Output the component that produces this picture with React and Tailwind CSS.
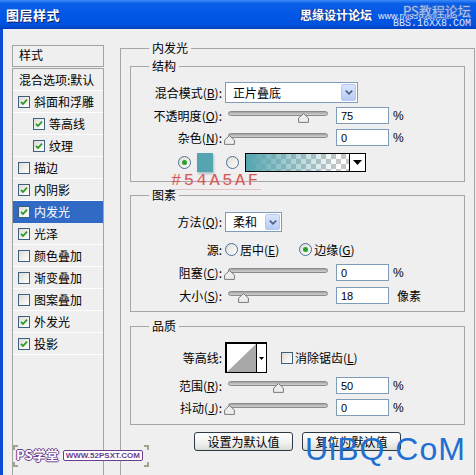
import React from 'react'

// Photoshop "图层样式" dialog, inner glow page, XP Luna look.

const styles = [
  { t: '斜面和浮雕', on: true },
  { t: '等高线', on: true, indent: true },
  { t: '纹理', on: true, indent: true },
  { t: '描边', on: false },
  { t: '内阴影', on: true },
  { t: '内发光', on: true, sel: true },
  { t: '光泽', on: true },
  { t: '颜色叠加', on: false },
  { t: '渐变叠加', on: false },
  { t: '图案叠加', on: false },
  { t: '外发光', on: true },
  { t: '投影', on: true },
]

function Check({ on }) {
  return (
    <span className="flex h-[12px] w-[12px] shrink-0 items-center justify-center border border-[#3d5f80] bg-[linear-gradient(135deg,#dedcd4,#ffffff)]">
      {on && (
        <svg width="8" height="8" viewBox="0 0 8 8">
          <path d="M1 3.8 L3 6 L7 1.6" fill="none" stroke="#2a9a2a" strokeWidth="1.8" />
        </svg>
      )}
    </span>
  )
}

function Radio({ on }) {
  return (
    <span className="flex h-[13px] w-[13px] shrink-0 items-center justify-center rounded-full border border-[#4a6f95] bg-[linear-gradient(135deg,#dedcd4,#ffffff)]">
      {on && <span className="h-[5px] w-[5px] rounded-full bg-[#2aa02a]" />}
    </span>
  )
}

// label with the underlined access key, e.g. 混合模式(B):
function Key({ t, k, colon = true }) {
  return (
    <span>
      {t}(<span className="underline">{k}</span>){colon ? ':' : ''}
    </span>
  )
}

function Row({ label, className = '', children }) {
  return (
    <div className={`flex items-center ${className}`}>
      <span className="w-[91px] shrink-0 text-right">{label}</span>
      <div className="ml-[3px] flex items-center">{children}</div>
    </div>
  )
}

function Chevron() {
  return (
    <svg width="8" height="5" viewBox="0 0 8 5">
      <path d="M0.8 0.6 L4 3.8 L7.2 0.6" fill="none" stroke="#4d6185" strokeWidth="1.7" />
    </svg>
  )
}

function Select({ text, className }) {
  return (
    <div className={`flex items-center border border-[#7f9db9] bg-white pl-[7px] ${className}`}>
      <span className="flex-1">{text}</span>
      <span className="mr-[1px] flex h-[calc(100%-2px)] w-[15px] items-center justify-center rounded-[2px] border border-[#b5c8f2] bg-[linear-gradient(#dbe6fd,#b6cbf6)]">
        <Chevron />
      </span>
    </div>
  )
}

// pos = thumb centre in px from the track's left end
function Slider({ pos }) {
  return (
    <div className="relative ml-[3px] h-[17px] w-[100px]">
      <div className="mt-[4px] h-[5px] rounded-full border border-[#8a8a8a] bg-[linear-gradient(#a4a4a4,#d2d2d2)]" />
      <svg className="absolute top-[6px]" style={{ left: pos - 5.5 }} width="11" height="10" viewBox="0 0 11 10">
        <path d="M5.5 0.6 L10.4 5 V9.4 H0.6 V5 Z" fill="#ededed" stroke="#7a7a7a" />
      </svg>
    </div>
  )
}

function Num({ v }) {
  return (
    <div className="ml-[8px] flex h-[17px] w-[53px] items-center border border-[#7f9db9] bg-white pl-[4px] [font-family:'Liberation_Sans',sans-serif] text-[11px]">
      {v}
    </div>
  )
}

function TitleBar() {
  return (
    <div className="relative flex h-[29px] shrink-0 items-center bg-[linear-gradient(to_bottom,#3d8af7_0%,#0a5fe8_12%,#0257e6_50%,#0052df_85%,#003fbd_100%)] pl-[6px]">
      <span className="text-[13px] font-bold tracking-[0.5px] text-white [text-shadow:1px_1px_0_#0a246a]">图层样式</span>
      <span className="absolute left-[300px] top-[8px] text-[12px] font-bold leading-[14px] text-white [text-shadow:0_0_1px_#1a3d9c,0_0_1px_#1a3d9c,1px_0_0_#1a3d9c,-1px_0_0_#1a3d9c]">
        思缘设计论坛
      </span>
      <span className="absolute left-[378px] top-[11px] text-[9px] leading-[10px] text-[#e4ecff] [font-family:'Liberation_Sans',sans-serif]">
        www.missyuan.com
      </span>
      <span className="absolute left-[403px] top-[3px] text-[13px] leading-[15px] text-[#a9c6f4] [text-shadow:1px_0_0_#3a66c8,-1px_0_0_#3a66c8,0_1px_0_#3a66c8,0_-1px_0_#3a66c8]">
        PS教程论坛
      </span>
      <span className="absolute left-[393px] top-[18px] text-[10px] leading-[11px] text-[#dce6ff] [font-family:'Liberation_Mono',monospace]">
        BBS.16XX8.COM
      </span>
    </div>
  )
}

function StyleList() {
  return (
    <div className="ml-[9px] mt-[16px] flex w-[92px] shrink-0 flex-col">
      <div className="flex h-[22px] items-center border border-[#a3a3a3] pb-[3px] pl-[6px]">样式</div>
      <div className="mt-[1px] flex-1 border-x border-t border-[#a3a3a3]">
        <div className="flex h-[22px] items-center border-b border-white pl-[6px]">混合选项:默认</div>
        {styles.map((s) => (
          <div
            key={s.t}
            className={`flex h-[22px] items-center gap-[4px] border-b ${s.indent ? 'pl-[20px]' : 'pl-[5px]'} ${
              s.sel ? 'border-[#316ac5] bg-[#316ac5] text-white' : 'border-white'
            }`}
          >
            <Check on={s.on} />
            <span>{s.t}</span>
          </div>
        ))}
      </div>
    </div>
  )
}

function GradientBar() {
  return (
    <div className="ml-[6px] flex h-[19px] w-[121px] border border-black">
      <div className="flex-1 [background-image:linear-gradient(to_right,#54a5af_0%,rgba(84,165,175,0.55)_40%,rgba(84,165,175,0)_90%),repeating-conic-gradient(#c6c6c6_0_25%,#ffffff_0_50%)] [background-size:100%_100%,10px_10px]" />
      <div className="flex w-[16px] items-center justify-center border-l border-black bg-white">
        <svg width="9" height="5" viewBox="0 0 9 5">
          <path d="M0 0 H9 L4.5 5 Z" fill="#000" />
        </svg>
      </div>
    </div>
  )
}

function Structure() {
  return (
    <fieldset className="mt-[4px] border border-[#a6a6a6] pb-[9px]">
      <legend className="ml-[18px] px-[3px] leading-[14px]">结构</legend>
      <Row className="mt-[9px]" label={<Key t="混合模式" k="B" />}>
        <Select text="正片叠底" className="h-[21px] w-[133px]" />
      </Row>
      <Row className="mt-[4px]" label={<Key t="不透明度" k="O" />}>
        <Slider pos={75} />
        <Num v="75" />
        <span className="ml-[4px] [font-family:'Liberation_Sans',sans-serif]">%</span>
      </Row>
      <Row className="mt-[5px]" label={<Key t="杂色" k="N" />}>
        <Slider pos={1.5} />
        <Num v="0" />
        <span className="ml-[4px] [font-family:'Liberation_Sans',sans-serif]">%</span>
      </Row>
      <div className="relative mt-[7px] flex h-[19px] items-center pl-[47px]">
        <Radio on />
        <span className="ml-[6px] h-[19px] w-[16px] bg-[#54a5af] shadow-[1px_2px_2px_rgba(60,110,120,0.35)]" />
        <span className="ml-[13px]">
          <Radio />
        </span>
        <GradientBar />
        {/* colour note pasted on the screenshot */}
        <span className="absolute left-[40px] top-[20px] border-b border-[#e2c4c4] text-[17px] leading-[16px] tracking-[2.6px] text-[#cf5a5a] [font-family:'Liberation_Mono',monospace] [text-shadow:0_0_2px_#f6d6d6]">
          #54A5AF
        </span>
      </div>
    </fieldset>
  )
}

function Elements() {
  return (
    <fieldset className="mt-[6px] border border-[#a6a6a6] pb-[7px]">
      <legend className="ml-[18px] px-[3px] leading-[14px]">图素</legend>
      <Row className="mt-[10px]" label={<Key t="方法" k="Q" />}>
        <Select text="柔和" className="h-[20px] w-[57px]" />
      </Row>
      <Row className="mt-[9px] h-[17px]" label="源:">
        <Radio />
        <span className="ml-[2px]">
          <Key t="居中" k="E" colon={false} />
        </span>
        <span className="ml-[20px]">
          <Radio on />
        </span>
        <span className="ml-[2px]">
          <Key t="边缘" k="G" colon={false} />
        </span>
      </Row>
      <Row className="mt-[6px]" label={<Key t="阻塞" k="C" />}>
        <Slider pos={1.5} />
        <Num v="0" />
        <span className="ml-[4px] [font-family:'Liberation_Sans',sans-serif]">%</span>
      </Row>
      <Row className="mt-[6px]" label={<Key t="大小" k="S" />}>
        <Slider pos={15} />
        <Num v="18" />
        <span className="ml-[8px]">像素</span>
      </Row>
    </fieldset>
  )
}

function Quality() {
  return (
    <fieldset className="mt-[7px] border border-[#a6a6a6] pb-[8px]">
      <legend className="ml-[18px] px-[3px] leading-[14px]">品质</legend>
      <Row className="mt-[9px]" label="等高线:">
        <div className="flex h-[31px] w-[42px] border border-l-2 border-t-2 border-black bg-white">
          <svg className="shrink-0" width="29" height="28" viewBox="0 0 29 28">
            <polygon points="0,28 29,0 29,28" fill="#a8a8a8" />
          </svg>
          <div className="flex flex-1 items-center justify-center border-l border-black">
            <svg width="5" height="3" viewBox="0 0 5 3">
              <path d="M0 0 H5 L2.5 3 Z" fill="#000" />
            </svg>
          </div>
        </div>
        <span className="ml-[14px]">
          <Check />
        </span>
        <span className="ml-[2px]">
          <Key t="消除锯齿" k="L" colon={false} />
        </span>
      </Row>
      <Row className="mt-[4px]" label={<Key t="范围" k="R" />}>
        <Slider pos={50} />
        <Num v="50" />
        <span className="ml-[4px] [font-family:'Liberation_Sans',sans-serif]">%</span>
      </Row>
      <Row className="mt-[5px]" label={<Key t="抖动" k="J" />}>
        <Slider pos={1.5} />
        <Num v="0" />
        <span className="ml-[4px] [font-family:'Liberation_Sans',sans-serif]">%</span>
      </Row>
    </fieldset>
  )
}

function Btn({ children }) {
  return (
    <button className="flex h-[19px] w-[99px] items-center justify-center rounded-[3px] border border-[#2c3a48] bg-[linear-gradient(#ffffff,#f0f0ee_60%,#dcdcd6)] text-[12px] leading-[14px]">
      {children}
    </button>
  )
}

export default function App() {
  return (
    <div className="relative flex h-[475px] w-[476px] flex-col overflow-hidden bg-[#efefef] text-[12px] leading-[14px] text-black [font-family:'Noto_Sans_CJK_SC','Liberation_Sans',sans-serif]">
      <TitleBar />
      <div className="flex min-h-0 flex-1 border-l-[3px] border-[#0a4bd6]">
        <StyleList />
        <fieldset className="ml-[16px] mt-[12px] w-[355px] self-start border-x border-t border-[#a6a6a6] px-[9px] pb-[40px]">
          <legend className="ml-[19px] px-[3px] leading-[14px]">内发光</legend>
          <Structure />
          <Elements />
          <Quality />
          <div className="mt-[7px] flex gap-[9px] pl-[64px]">
            <Btn>设置为默认值</Btn>
            <Btn>复位为默认值</Btn>
          </div>
        </fieldset>
      </div>

      {/* watermarks stamped over the screenshot */}
      <div className="absolute left-[14px] top-[447px] flex items-center gap-[4px]">
        <span className="absolute -left-[1px] -top-[2px] h-[5px] w-[5px] border-l-2 border-t-2 border-[#9aa88a]" />
        <span className="absolute -bottom-[4px] -left-[1px] h-[5px] w-[5px] border-b-2 border-l-2 border-[#9aa88a]" />
        <span className="absolute -right-[6px] -top-[2px] h-[5px] w-[5px] border-r-2 border-t-2 border-[#9aa88a]" />
        <span className="absolute -bottom-[4px] -right-[6px] h-[5px] w-[5px] border-b-2 border-r-2 border-[#9aa88a]" />
        <span className="pl-[2px] text-[13px] font-bold leading-[16px] text-white [text-shadow:1px_0_0_#6b3d8e,-1px_0_0_#6b3d8e,0_1px_0_#6b3d8e,0_-1px_0_#6b3d8e]">
          PS学堂
        </span>
        <span className="rounded-[2px] border border-[#6b3d8e] bg-white px-[2px] text-[8px] font-bold leading-[9px] text-[#6b3d8e] [font-family:'Liberation_Sans',sans-serif]">
          WWW.52PSXT.COM
        </span>
      </div>
      <span className="absolute left-[305px] top-[433px] text-[32px] leading-none tracking-[1px] text-[#1f6fd0] [font-family:'Liberation_Sans',sans-serif]">
        UiBQ.CoM
      </span>
    </div>
  )
}
